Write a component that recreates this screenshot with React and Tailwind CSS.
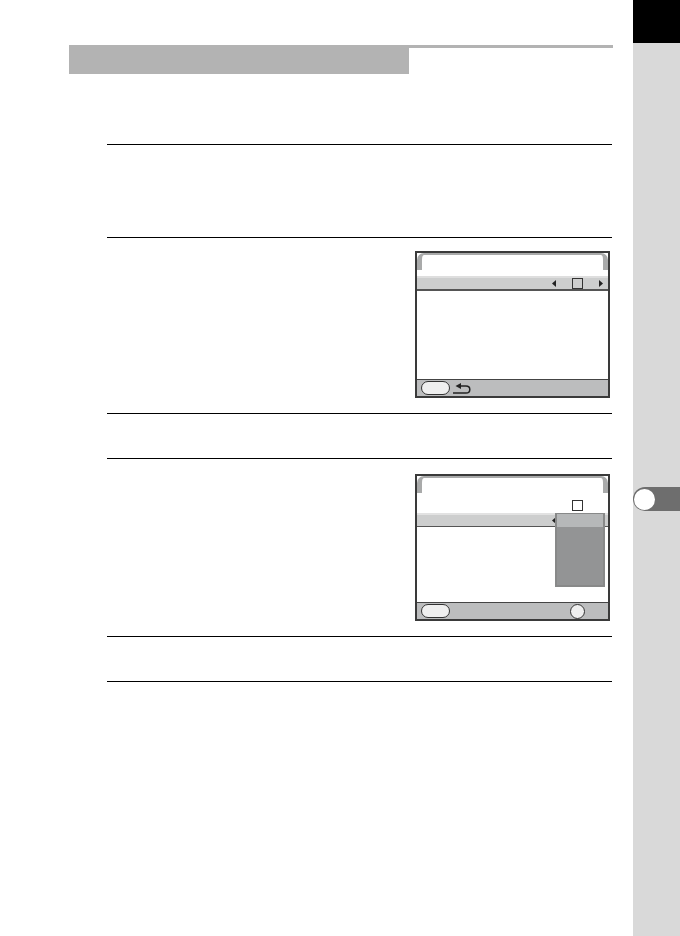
import React from 'react';

function Triangle({ dir }) {
  return (
    <svg width="4" height="7" viewBox="0 0 4 7" className="shrink-0">
      <path d={dir === 'left' ? 'M4 0V7L0 3.5Z' : 'M0 0V7L4 3.5Z'} fill="#222" />
    </svg>
  );
}

function BackArrow() {
  return (
    <svg width="18" height="13" viewBox="0 0 18 13" className="ml-[3px] shrink-0">
      <path d="M2.5 4L8 1V7Z" fill="#222" />
      <path d="M7.5 4H13C15.6 4 16.8 5.6 16.8 7.4C16.8 9.3 15.6 11 13 11H0" fill="none" stroke="#222" strokeWidth="1.5" />
    </svg>
  );
}

function Screen({ children, footerRight }) {
  return (
    <div className="relative flex h-[147px] w-[195px] flex-col border-2 border-[#3a3a3a] bg-white">
      {/* tab */}
      <div className="h-[17px] rounded-t-[7px] border-x-[5px] border-t-2 border-[#a9aaaa] bg-white"></div>
      <div className="h-[6px]"></div>
      {children}
      <div className="mt-auto flex h-[17px] items-center border-t border-[#444] bg-[#bcbdbe] pl-[4px]">
        <div className="h-[14px] w-[29px] rounded-full border border-[#333] bg-[#efefef]"></div>
        {footerRight}
      </div>
    </div>
  );
}

export default function App() {
  return (
    <div className="flex h-[936px] w-[680px] overflow-hidden bg-white">
      <div className="flex-1 pl-[69px] pr-[20px] pt-[45px]">
        <div className="border-t-[3px] border-[#b3b3b3]">
          <div className="h-[26px] w-[340px] bg-[#b3b3b3]"></div>
        </div>

        <div className="ml-[38px] mr-[1px] mt-[70px]">
          <div className="h-[93px] border-t border-black"></div>

          <div className="flex h-[176px] justify-end border-t border-black pr-[2px] pt-[13px]">
            <Screen footerRight={<BackArrow />}>
              <div className="flex h-[15px] items-center border-b-2 border-[#555] border-t-2 border-t-[#dedede] bg-[#cdcece] pl-[135px]">
                <Triangle dir="left" />
                <div className="ml-[16px] h-[11px] w-[11px] shrink-0 border border-[#333]"></div>
                <div className="ml-[16px]"><Triangle dir="right" /></div>
              </div>
            </Screen>
          </div>

          <div className="h-[45px] border-t border-black"></div>

          <div className="flex h-[178px] justify-end border-t border-black pr-[2px] pt-[15px]">
            <Screen footerRight={<div className="ml-[120px] h-[15px] w-[15px] rounded-full border border-[#333] bg-[#efefef]"></div>}>
              <div className="flex h-[14px] items-start pl-[155px] pt-[1px]">
                <div className="h-[11px] w-[11px] shrink-0 border border-[#333] bg-white"></div>
              </div>
              <div className="flex h-[14px] items-center border-b border-[#555] border-t-2 border-t-[#e2e2e2] bg-[#cdcece] pl-[135px]">
                <Triangle dir="left" />
              </div>
              {/* open dropdown */}
              <div className="absolute left-[138px] top-[37px] h-[74px] w-[50px] border-2 border-t border-[#888989] bg-[#939495]">
                <div className="h-[13px] bg-[#b6b8b9]"></div>
              </div>
            </Screen>
          </div>

          <div className="h-[45px] border-t border-black"></div>
          <div className="border-t border-black"></div>
        </div>
      </div>

      {/* right chapter tab */}
      <div className="flex w-[47px] flex-col">
        <div className="h-[43px] bg-black"></div>
        <div className="flex-1 bg-[#d9d9d9] pt-[444px]">
          <div className="flex h-[24px] items-center rounded-l-full bg-[#6e6e6e] pl-[1px]">
            <div className="h-[21px] w-[21px] rounded-full bg-white"></div>
          </div>
        </div>
      </div>
    </div>
  );
}
